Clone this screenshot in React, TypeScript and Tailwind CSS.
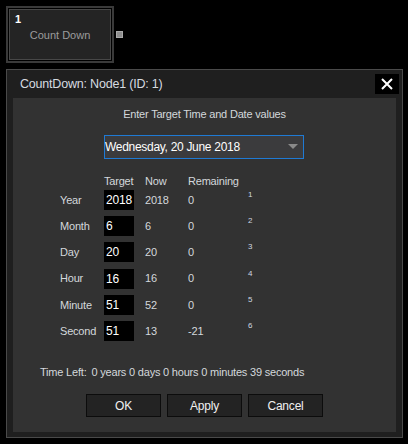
import React from "react";

const rows = [
  { label: "Year", target: "2018", now: "2018", rem: "0", n: "1" },
  { label: "Month", target: "6", now: "6", rem: "0", n: "2" },
  { label: "Day", target: "20", now: "20", rem: "0", n: "3" },
  { label: "Hour", target: "16", now: "16", rem: "0", n: "4" },
  { label: "Minute", target: "51", now: "52", rem: "0", n: "5" },
  { label: "Second", target: "51", now: "13", rem: "-21", n: "6" },
];

function Button({ children }: { children: React.ReactNode }) {
  return (
    <div className="flex h-[23px] w-[75px] items-center justify-center border border-[#0c0c0c] bg-[#232323] text-[12px] text-[#f0f0f0]">
      {children}
    </div>
  );
}

export default function App() {
  return (
    <div
      className="h-[444px] w-[408px] overflow-hidden bg-black pl-[6px] pt-[6px]"
      style={{ fontFamily: '"Liberation Sans", Arial, sans-serif' }}
    >
      {/* node */}
      <div className="flex items-center">
        <div className="h-[57px] w-[108px] border-2 border-[#3a3a3a] p-px">
          <div className="flex h-full w-full flex-col border border-[#474747] bg-[#242424] px-[5px] pt-[3px]">
            <span className="text-[11px] font-bold leading-[13px] text-white">1</span>
            <span className="mt-[3px] text-center text-[11px] leading-[13px] text-[#9c9c9c]">
              Count Down
            </span>
          </div>
        </div>
        <div className="ml-[2px] h-[7px] w-[7px] border border-[#aaaaaa] bg-[#8e8e8e]" />
      </div>

      {/* dialog */}
      <div className="mt-[6px] flex h-[369px] w-[397px] flex-col border border-[#4a4a4a] bg-[#1f1f1f]">
        <div className="flex h-[28px] items-center justify-between pl-[13px] pr-[3px]">
          <span className="text-[12.5px] tracking-[-0.2px] text-[#d6dbe0]">CountDown: Node1 (ID: 1)</span>
          <div className="flex h-[20px] w-[24px] items-center justify-center bg-black">
            <svg width="12" height="12" viewBox="0 0 12 12">
              <path d="M1 1L11 11M11 1L1 11" stroke="white" strokeWidth="2" />
            </svg>
          </div>
        </div>

        <div className="mx-[6px] mb-[5px] flex flex-1 flex-col bg-[#323232] text-[11px] tracking-[-0.2px] text-[#d4d8dc]">
          <div className="mt-[10px] text-center leading-[12px]">Enter Target Time and Date values</div>

          <div className="ml-[91px] mt-[15px] flex h-[24px] w-[200px] items-center justify-between border border-[#1f7ad4] bg-[#3b3b3d] pr-[5px]">
            <span className="text-[12px] tracking-[-0.3px] text-white">Wednesday, 20 June 2018</span>
            <svg width="10" height="6" viewBox="0 0 10 6">
              <path d="M0 0H10L5 5Z" fill="#8a8a8a" />
            </svg>
          </div>

          <div className="ml-[47px] mt-[16px]">
            <div className="grid h-[12px] grid-cols-[44px_41px_43px_60px_20px] items-center leading-[12px]">
              <span />
              <span>Target</span>
              <span>Now</span>
              <span>Remaining</span>
              <span />
            </div>
            {rows.map((r) => (
              <div
                key={r.label}
                className="grid h-[26.2px] grid-cols-[44px_41px_43px_60px_20px] items-center"
              >
                <span>{r.label}</span>
                <div className="flex h-[20px] w-[30px] items-center bg-black pl-[2px] text-[12px] text-white">
                  {r.target}
                </div>
                <span>{r.now}</span>
                <span>{r.rem}</span>
                <span className="-mt-[10px] text-[8px] text-[#cfd8e0]">{r.n}</span>
              </div>
            ))}
          </div>

          <div className="ml-[27px] mt-[21px] flex gap-[5px] leading-[14px]">
            <span>Time Left:</span>
            <span>0 years 0 days 0 hours 0 minutes 39 seconds</span>
          </div>

          <div className="mt-[15px] flex justify-center gap-[6px]">
            <Button>OK</Button>
            <Button>Apply</Button>
            <Button>Cancel</Button>
          </div>
        </div>
      </div>
    </div>
  );
}
